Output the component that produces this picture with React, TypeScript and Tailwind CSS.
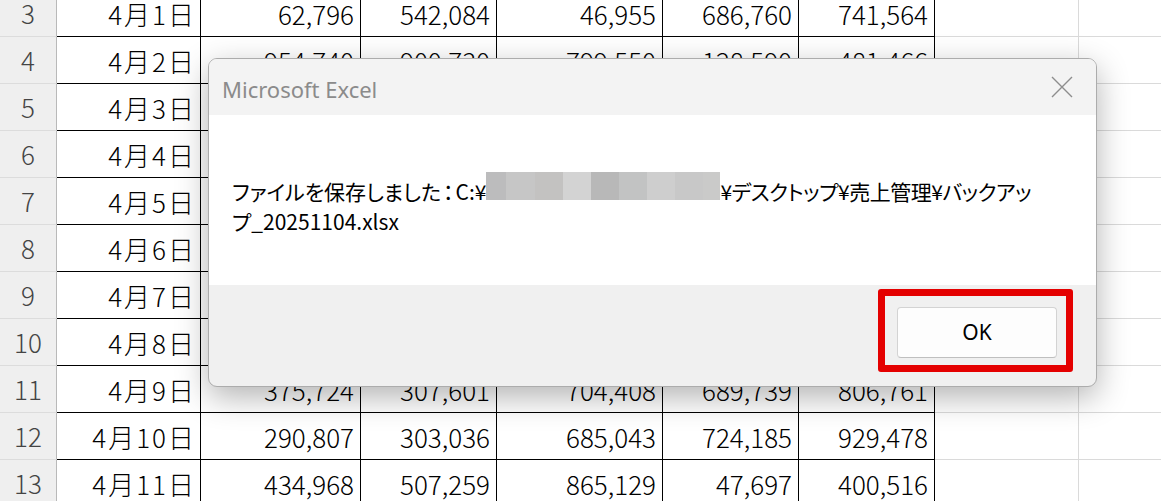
const ROWS: [number, string, string, string, string, string, string][] = [
  [3, "4月1日", "62,796", "542,084", "46,955", "686,760", "741,564"],
  [4, "4月2日", "954,740", "900,730", "799,550", "128,590", "481,466"],
  [5, "4月3日", "", "", "", "", ""],
  [6, "4月4日", "", "", "", "", ""],
  [7, "4月5日", "", "", "", "", ""],
  [8, "4月6日", "", "", "", "", ""],
  [9, "4月7日", "", "", "", "", ""],
  [10, "4月8日", "", "", "", "", ""],
  [11, "4月9日", "375,724", "307,601", "704,408", "689,739", "806,761"],
  [12, "4月10日", "290,807", "303,036", "685,043", "724,185", "929,478"],
  [13, "4月11日", "434,968", "507,259", "865,129", "47,697", "400,516"],
];

// widths of the bordered data columns B..G
const DATA_W = ["w-[144px]", "w-[160px]", "w-[136px]", "w-[166px]", "w-[136px]", "w-[136px]"];

const BLUR = [
  ["w-[20px]", "bg-[#bcbcbd]"],
  ["w-[29px]", "bg-[#c6c6c6]"],
  ["w-[28px]", "bg-[#c3c2c1]"],
  ["w-[28px]", "bg-[#d3d3d3]"],
  ["w-[28px]", "bg-[#b8b8b8]"],
  ["w-[28px]", "bg-[#c2c3c3]"],
  ["w-[28px]", "bg-[#cecece]"],
  ["w-[28px]", "bg-[#c8c8c8]"],
  ["w-[17px]", "bg-[#cacac9]"],
];

function Sheet() {
  return (
    <div className="-mt-[10px] flex flex-col">
      {ROWS.map(([num, date, ...vals]) => (
        <div key={num} className="flex h-[47px] text-[26px] font-light leading-none text-black">
          {/* row header */}
          <div className="flex w-[57px] shrink-0 items-center justify-center border-r border-b border-r-[#b9b9b9] border-b-[#dcdcdc] bg-[#efefef] text-[#444]">
            {num}
          </div>
          <div className="flex w-[144px] shrink-0 items-center justify-end border-r border-b border-black pt-[2px] pr-[4px] tracking-[2px]">
            {date}
          </div>
          {vals.map((v, i) => (
            <div
              key={i}
              className={`flex ${DATA_W[i + 1]} shrink-0 items-center justify-end border-r border-b border-black pt-[2px] pr-[6px]`}
            >
              {v}
            </div>
          ))}
          {/* plain grid columns */}
          <div className="w-[144px] shrink-0 border-r border-b border-[#dadada]" />
          <div className="flex-1 border-b border-[#dadada]" />
        </div>
      ))}
    </div>
  );
}

function Dialog() {
  return (
    <div className="absolute left-[208px] top-[58px] flex h-[329px] w-[889px] flex-col overflow-hidden rounded-[9px] border border-[#acacac] bg-[#f0f0f0] shadow-[0_10px_32px_rgba(0,0,0,0.3)]">
      {/* Title bar */}
      <div className="flex h-[56px] shrink-0 items-center justify-between bg-[#f3f3f3] pl-[13px] pr-[23px]">
        <span className="pt-[4px] font-['Noto_Sans',sans-serif] text-[22px] text-[#8b8b8b]">Microsoft Excel</span>
        <svg width="22" height="22" viewBox="0 0 22 22" className="mb-[1px]">
          <path d="M1 1 L21 21 M21 1 L1 21" stroke="#8d8d8d" strokeWidth="1.4" fill="none" />
        </svg>
      </div>

      {/* Message */}
      <div className="h-[170px] shrink-0 bg-white pl-[23px] pt-[57px] text-[21px] leading-[30px] text-black [font-feature-settings:'palt']">
        <div className="whitespace-nowrap">
          ファイルを保存しました<span className="mx-[2px]">：</span>C:¥
          <span className="inline-flex h-[28px]">
            {BLUR.map(([w, c], i) => (
              <span key={i} className={`${w} ${c} h-full`} />
            ))}
          </span>
          <span className="tracking-[-0.5px]">¥デスクトップ¥売上管理¥バックアッ</span>
        </div>
        <div>プ_20251104.xlsx</div>
      </div>

      {/* Footer */}
      <div className="flex flex-1 items-start justify-end pt-[22px] pr-[39px]">
        <button className="flex h-[51px] w-[160px] items-center justify-center rounded-[4px] border border-[#d3d3d3] border-b-[#bfbfbf] bg-[#fdfdfd] font-['Noto_Sans',sans-serif] text-[21px] text-black">
          OK
        </button>
      </div>

      {/* red annotation box */}
      <div className="absolute left-[669px] top-[230px] h-[83px] w-[195px] rounded-[3px] border-[7px] border-[#e40000]" />
    </div>
  );
}

export default function App() {
  return (
    <div className="relative h-[501px] w-[1161px] overflow-hidden bg-white font-['Noto_Sans_CJK_JP',sans-serif]">
      <Sheet />
      <Dialog />
    </div>
  );
}
